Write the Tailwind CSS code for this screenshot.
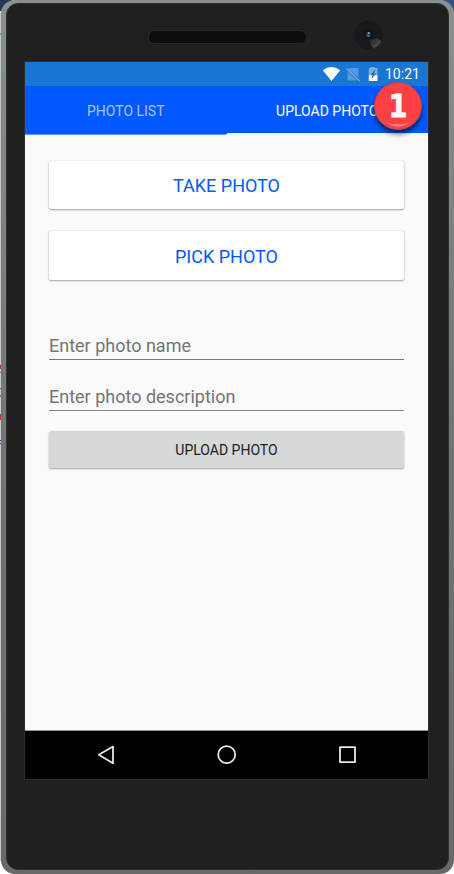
<!DOCTYPE html>
<html lang="en">
<head>
<meta charset="utf-8">
<title>Photo upload</title>
<script src="https://cdn.jsdelivr.net/npm/@tailwindcss/browser@4"></script>
</head>
<body class="relative w-[454px] h-[874px] overflow-hidden bg-white font-[Roboto,sans-serif]">
  <!-- desktop visible around the device -->
  <div class="absolute left-0 top-0 w-3 h-[11px] bg-[#26375a]"></div>
  <div class="absolute right-0 top-0 w-3 h-3 bg-[#34507f]"></div>
  <div class="absolute left-0 top-[11px] w-px h-[850px] bg-[#c5c8c8]"></div>
  <div class="absolute left-0 top-[11px] w-px h-0.5 bg-[#e6d99a]"></div>
  <div class="absolute left-0 top-[33px] w-px h-0.5 bg-[#8490a8]"></div>
  <div class="absolute left-0 top-[365px] w-px h-1 bg-[#d03030]"></div>
  <div class="absolute left-0 top-[372px] w-px h-px bg-[#d04060]"></div>
  <div class="absolute left-0 top-[388px] w-px h-px bg-[#e02030]"></div>
  <div class="absolute left-0 top-[395px] w-px h-0.5 bg-[#d04060]"></div>
  <div class="absolute left-0 top-[414px] w-px h-[6px] bg-[#d03030]"></div>
  <div class="absolute left-0 top-[440px] w-px h-px bg-[#3030d0]"></div>
  <div class="absolute left-0 top-[443px] w-px h-px bg-[#3030d0]"></div>

  <div class="relative ml-px w-[453px] h-[874px] rounded-[14px] bg-linear-to-b from-[#8a908c] via-[#717673] to-[#666968] pt-[3px] pl-[5px]">
    <div class="w-[443px] h-[867px] rounded-[12px] bg-[#202020] border border-[#303231]">
      <header class="relative h-[57px]">
        <div class="absolute left-[141px] top-[26px] w-[159px] h-[14px] rounded-[6px] bg-[#0e0e0e] border border-[#292929]"></div>
        <svg class="absolute left-[346px] top-[16px]" width="31" height="31" viewBox="0 0 31 31">
          <defs><clipPath id="lens"><circle cx="15.5" cy="15" r="14.3"/></clipPath>
          <linearGradient id="glare" x1="0" y1="0" x2="1" y2="1"><stop offset="0" stop-color="#1c1c1e"/><stop offset="1" stop-color="#6a6a6a"/></linearGradient></defs>
          <circle cx="15.5" cy="15" r="14.3" fill="#18191b"/>
          <g clip-path="url(#lens)"><path d="M16 20L21 31L31 23L24 18Z" fill="url(#glare)"/></g>
          <circle cx="15.500" cy="14.500" r="5" fill="#111318"/>
          <ellipse cx="15.300" cy="14.500" rx="2.300" ry="2.800" fill="#303a5c"/>
          <circle cx="15.800" cy="13" r="1" fill="#8a9cc0"/><circle cx="15.500" cy="16" r="1.200" fill="#267878"/>
        </svg>
      </header>
      <main class="ml-[17px] w-[405px] h-[719px] border border-[#2c2c2c] bg-[#fafafa] flex flex-col">
        <div class="h-[24px] shrink-0 bg-[#1976d2] flex items-center text-white">
          <svg class="ml-[297px]" width="60" height="24" viewBox="0 0 60 24">
            <path d="M.8 8.200Q9.500 1.800 18.200 8.200L9.500 19Z" fill="#fff"/>
            <path d="M28.500 6H36.500V16L26.500 7.300ZM25.500 9L35 18.500H25.500Z" fill="#5299df"/>
            <path d="M24.500 6.500L37.500 19" stroke="#75afe5" stroke-width="1.200"/>
            <path d="M46.800 6H49V5H53V6H55.500V13H46.800Z" fill="#75afe5"/>
            <path d="M46.800 13H55.500V19H46.800Z" fill="#fff"/>
            <path d="M53.500 7L48.500 13H50.500L49.500 17L54 11.500H51.800Z" fill="#1765b8"/>
          </svg>
          <span class="ml-[3px] text-[14px] leading-[24px]">10:21</span>
        </div>
        <nav class="h-[48px] shrink-0 bg-[#0059ff] flex text-[14px] leading-[50px] text-center whitespace-nowrap">
          <div class="w-[201.500px] text-[#a6c5ff]">PHOTO LIST</div>
          <div class="w-[201.500px] text-white border-b-[1.500px] border-[#fafafa]">UPLOAD PHOTO</div>
        </nav>
        <div class="h-px shrink-0 w-[201px] bg-[#5d98ff]"></div>
        <section class="px-[24px] pt-[26px] flex-1 flex flex-col">
          <div class="h-[48px] rounded-[2px] bg-white shadow-[0_1px_2px_rgba(0,0,0,.35),0_0_1px_rgba(0,0,0,.25)] text-[18px] leading-[49px] text-center text-[#0059ff]">TAKE PHOTO</div>
          <div class="mt-[22px] h-[49px] rounded-[2px] bg-white shadow-[0_1px_2px_rgba(0,0,0,.35),0_0_1px_rgba(0,0,0,.25)] text-[18px] leading-[51px] text-center text-[#0059ff]">PICK PHOTO</div>
          <div class="mt-[52px] h-[28px] border-b border-[#777] text-[18px] leading-[27px] text-[#757575]">Enter photo name</div>
          <div class="mt-[23px] h-[28px] border-b border-[#858585] text-[18px] leading-[27px] text-[#757575]">Enter photo description</div>
          <div class="mt-[20px] h-[37px] rounded-[2px] bg-[#d6d7d7] shadow-[0_1px_2px_rgba(0,0,0,.35)] text-[14px] leading-[38px] text-center text-[#202020]">UPLOAD PHOTO</div>
        </section>
        <footer class="h-[49px] shrink-0 bg-black border-t border-[#909590]">
          <svg width="403" height="48" viewBox="0 0 403 48" fill="none" stroke="#e8e8e8" stroke-width="1.800" stroke-linejoin="round">
            <path d="M73.800 23.800L88 15.500V32.200Z"/>
            <circle cx="201.700" cy="23.700" r="8.500"/>
            <rect x="315" y="16.200" width="15" height="15"/>
          </svg>
        </footer>
      </main>
    </div>
  </div>

  <!-- step marker over the active tab -->
  <div class="absolute left-[374px] top-[82px] w-[48px] h-[48px] rounded-full bg-[#fe4045] border border-[#b94855] shadow-[0_4px_5px_rgba(0,0,0,.6)] text-[#f8f8f8]">
    <svg class="absolute left-0 top-0" width="46" height="46" viewBox="0 0 46 46"><path d="M11 39Q23 48 35 39Q23 44 11 39Z" fill="#ff8588"/></svg>
    <span class="relative block text-center font-bold text-[32px] leading-[46px] font-['DejaVu_Sans',sans-serif] [-webkit-text-stroke:.800px_#f8f8f8] scale-x-[.84]">1</span>
  </div>
</body>
</html>
